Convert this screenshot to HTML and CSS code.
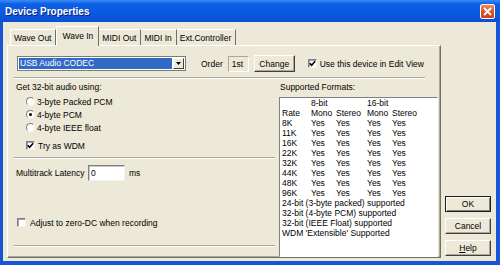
FILE: index.html
```html
<!DOCTYPE html>
<html lang="en">
<head>
    <meta charset="UTF-8">
    <meta name="viewport" content="width=device-width, initial-scale=1.0">
    <title>Device Properties</title>
    <link rel="stylesheet" href="styles.css">
</head>

<body>
    <div class="window">
        <div class="titlebar">
            <span class="title">Device Properties</span>
            <span class="close">
                <svg width="9" height="9" viewBox="0 0 9 9"><path d="M1 1 L8 8 M8 1 L1 8" stroke="#fff" stroke-width="1.8" fill="none"/></svg>
            </span>
        </div>

        <div class="frame">
            <div class="tabs-area">
                <div class="tab-strip">
                    <div class="tab first">Wave Out</div>
                    <div class="tab active">Wave In</div>
                    <div class="tab">MIDI Out</div>
                    <div class="tab">MIDI In</div>
                    <div class="tab">Ext.Controller</div>
                </div>

                <div class="panel">
                    <div class="device-row">
                        <div class="combo">
                            <span class="combo-value">USB Audio CODEC</span>
                            <span class="combo-btn">
                                <svg width="5" height="3" viewBox="0 0 5 3"><path d="M0 0 H5 L2.5 3 Z" fill="#000"/></svg>
                            </span>
                        </div>
                        <span class="order-label">Order</span>
                        <span class="order-box">1st</span>
                        <span class="btn change">Change</span>
                        <div class="check-row edit-view">
                            <span class="checkbox">
                                <svg width="7" height="7" viewBox="0 0 7 7"><path d="M0.8 3.2 L2.6 5.2 L6.2 1.2" stroke="#000" stroke-width="1.6" fill="none"/></svg>
                            </span>
                            Use this device in Edit View
                        </div>
                    </div>

                    <div class="sep sep-top"></div>

                    <div class="columns">
                        <div class="left-col">
                            <div class="group-label">Get 32-bit audio using:</div>
                            <div class="radios">
                                <div class="radio-row"><span class="radio"></span>3-byte Packed PCM</div>
                                <div class="radio-row"><span class="radio on"></span>4-byte PCM</div>
                                <div class="radio-row"><span class="radio"></span>4-byte IEEE float</div>
                            </div>
                            <div class="check-row wdm">
                                <span class="checkbox">
                                    <svg width="7" height="7" viewBox="0 0 7 7"><path d="M0.8 3.2 L2.6 5.2 L6.2 1.2" stroke="#000" stroke-width="1.6" fill="none"/></svg>
                                </span>
                                Try as WDM
                            </div>
                            <div class="sep mid-sep"></div>
                            <div class="latency-row">
                                <span class="latency-label">Multitrack Latency</span>
                                <span class="latency-input">0</span>
                                <span class="ms">ms</span>
                            </div>
                            <div class="check-row zero-dc">
                                <span class="checkbox"></span>
                                Adjust to zero-DC when recording
                            </div>
                            <div class="sep bottom-sep"></div>
                        </div>

                        <div class="right-col">
                            <div class="formats-label">Supported Formats:</div>
                            <div class="listbox">
                                <div class="formats">
                                    <span></span><span>8-bit</span><span></span><span>16-bit</span><span></span>
                                    <span>Rate</span><span>Mono</span><span>Stereo</span><span>Mono</span><span>Stereo</span>
                                    <span>8K</span><span>Yes</span><span>Yes</span><span>Yes</span><span>Yes</span>
                                    <span>11K</span><span>Yes</span><span>Yes</span><span>Yes</span><span>Yes</span>
                                    <span>16K</span><span>Yes</span><span>Yes</span><span>Yes</span><span>Yes</span>
                                    <span>22K</span><span>Yes</span><span>Yes</span><span>Yes</span><span>Yes</span>
                                    <span>32K</span><span>Yes</span><span>Yes</span><span>Yes</span><span>Yes</span>
                                    <span>44K</span><span>Yes</span><span>Yes</span><span>Yes</span><span>Yes</span>
                                    <span>48K</span><span>Yes</span><span>Yes</span><span>Yes</span><span>Yes</span>
                                    <span>96K</span><span>Yes</span><span>Yes</span><span>Yes</span><span>Yes</span>
                                    <span class="wide">24-bit (3-byte packed) supported</span>
                                    <span class="wide">32-bit (4-byte PCM) supported</span>
                                    <span class="wide">32-bit (IEEE Float) supported</span>
                                    <span class="wide">WDM 'Extensible' Supported</span>
                                </div>
                            </div>
                        </div>
                    </div>
                </div>
            </div>

            <div class="buttons">
                <span class="btn default">OK</span>
                <span class="btn">Cancel</span>
                <span class="btn"><u>H</u>elp</span>
            </div>
        </div>
    </div>
</body>
</html>
```

FILE: styles.css
```css
body {
  margin: 0;
  font-family: "Liberation Sans", Arial, sans-serif;
  font-size: 8.5px;
  color: #000;
}

.window {
  width: 500px;
  height: 265px;
  display: flex;
  flex-direction: column;
  background-color: #ece9d8;
}

.titlebar {
  height: 22px;
  flex: none;
  display: flex;
  align-items: center;
  justify-content: space-between;
  padding: 0 5px;
  background: linear-gradient(to bottom, #3d8cf7 0%, #0d5fe6 18%, #0a58de 65%, #0b50d2 100%);
}

.title {
  color: #fff;
  font-weight: bold;
  font-size: 10px;
  text-shadow: 1px 1px #0a2383;
}

.close {
  width: 15px;
  height: 15px;
  box-sizing: border-box;
  border: 1px solid #fff;
  border-radius: 2px;
  background: linear-gradient(to bottom, #ee8a63, #d8501f 60%, #c9441a);
  display: flex;
  align-items: center;
  justify-content: center;
}

.frame {
  flex: 1;
  min-height: 0;
  display: flex;
  border: solid #1555d6;
  border-width: 0 4px 4px 3px;
  padding: 4px 5px 3px 4px;
}

/* tabs */

.tabs-area {
  width: 434px;
  display: flex;
  flex-direction: column;
}

.tab-strip {
  height: 19px;
  flex: none;
  display: flex;
  align-items: flex-end;
  padding-left: 3px;
}

.tab {
  height: 16px;
  box-sizing: border-box;
  padding: 0 4px 0 3px;
  border-top: 1px solid #fff;
  border-right: 1px solid #716f64;
  display: flex;
  align-items: center;
  white-space: nowrap;
}

.tab.first {
  border-left: 1px solid #fff;
}

.tab.active {
  height: 20px;
  margin-bottom: -1px;
  padding: 0 5px 2px;
  border-left: 1px solid #fff;
  background-color: #ece9d8;
  position: relative;
  z-index: 1;
}

.panel {
  flex: 1;
  min-height: 0;
  display: flex;
  flex-direction: column;
  border: 1px solid;
  border-color: #fff #716f64 #716f64 #fff;
  box-shadow: inset -1px -1px #aca899;
  padding: 9px 2px 0 6px;
}

/* shared controls */

.sep {
  height: 2px;
  flex: none;
  box-sizing: border-box;
  border-top: 1px solid #aca899;
  border-bottom: 1px solid #fff;
}

.btn {
  height: 16px;
  box-sizing: border-box;
  display: flex;
  align-items: center;
  justify-content: center;
  background-color: #ece9d8;
  border: 1px solid;
  border-color: #fff #404040 #404040 #fff;
  box-shadow: inset -1px -1px #aca899;
}

.btn.default {
  border-color: #1e1e1e;
  box-shadow: inset 1px 1px #fff, inset -1px -1px #808080;
}

.check-row {
  display: flex;
  align-items: center;
  height: 13px;
  white-space: nowrap;
}

.checkbox {
  width: 9px;
  height: 9px;
  flex: none;
  box-sizing: border-box;
  margin-right: 3px;
  background-color: #fff;
  border: 1px solid;
  border-color: #808080 #f4f3ee #f4f3ee #808080;
  box-shadow: inset 1px 1px #a0a0a0;
  display: flex;
  align-items: center;
  justify-content: center;
}

.radio {
  width: 9px;
  height: 9px;
  flex: none;
  box-sizing: border-box;
  margin-right: 2px;
  border-radius: 50%;
  background-color: #fff;
  border: 1px solid;
  border-color: #808080 #f4f3ee #f4f3ee #808080;
  display: flex;
  align-items: center;
  justify-content: center;
}

.radio.on::after {
  content: "";
  width: 3px;
  height: 3px;
  border-radius: 50%;
  background-color: #000;
}

/* first row */

.device-row {
  height: 17px;
  flex: none;
  display: flex;
  align-items: center;
  padding-left: 3px;
}

.combo {
  width: 169px;
  height: 15px;
  box-sizing: border-box;
  display: flex;
  border: 1px solid #7a7a7a;
  background-color: #fff;
  padding: 1px;
}

.combo-value {
  flex: 1;
  background-color: #316ac5;
  color: #fff;
  padding-left: 1px;
  line-height: 11px;
  margin-right: 1px;
}

.combo-btn {
  width: 11px;
  box-sizing: border-box;
  background-color: #ece9d8;
  border: 1px solid;
  border-color: #fff #404040 #404040 #fff;
  display: flex;
  align-items: center;
  justify-content: center;
}

.order-label {
  margin-left: 15px;
}

.order-box {
  width: 21px;
  height: 16px;
  box-sizing: border-box;
  margin-left: 5px;
  padding-left: 3px;
  display: flex;
  align-items: center;
  border: 1px solid;
  border-color: #aca899 #fff #fff #aca899;
}

.btn.change {
  width: 41px;
  height: 17px;
  margin-left: 5px;
}

.edit-view {
  margin-left: 13px;
}

.sep-top {
  width: 411px;
  margin-top: 5px;
}

/* lower part */

.columns {
  flex: 1;
  min-height: 0;
  display: flex;
  gap: 4px;
}

.left-col {
  width: 261px;
  display: flex;
  flex-direction: column;
}

.right-col {
  flex: 1;
  display: flex;
  flex-direction: column;
}

.group-label {
  margin: 3px 0 0 2px;
  line-height: 10px;
}

.radios {
  margin: 3px 0 0 12px;
}

.radio-row {
  height: 13px;
  display: flex;
  align-items: center;
}

.wdm {
  margin: 5px 0 0 12px;
}

.mid-sep {
  margin-top: 5px;
}

.latency-row {
  height: 16px;
  margin: 6px 0 0 2px;
  display: flex;
  align-items: center;
}

.latency-label {
  width: 72px;
}

.latency-input {
  width: 37px;
  height: 16px;
  box-sizing: border-box;
  padding-left: 2px;
  display: flex;
  align-items: center;
  background-color: #fff;
  border: 1px solid;
  border-color: #808080 #f4f3ee #f4f3ee #808080;
  box-shadow: inset 1px 1px #c8c8c8;
}

.ms {
  margin-left: 4px;
}

.zero-dc {
  margin: 35px 0 0 3px;
}

.zero-dc .checkbox {
  margin-right: 4px;
}

.bottom-sep {
  margin-top: 16px;
}

.formats-label {
  margin: 3px 0 0 1px;
  line-height: 10px;
}

.listbox {
  flex: 1;
  margin-top: 5px;
  padding: 0 2px;
  background-color: #fff;
  border: 1px solid;
  border-color: #808080 #fff #fff #808080;
  overflow: hidden;
}

.formats {
  display: grid;
  grid-template-columns: 29px 25px 31px 25px auto;
  line-height: 10px;
  white-space: nowrap;
}

.formats .wide {
  grid-column: 1 / -1;
}

/* dialog buttons */

.buttons {
  width: 46px;
  margin-left: 4px;
  padding-bottom: 2px;
  display: flex;
  flex-direction: column;
  justify-content: flex-end;
  gap: 6px;
}
```
